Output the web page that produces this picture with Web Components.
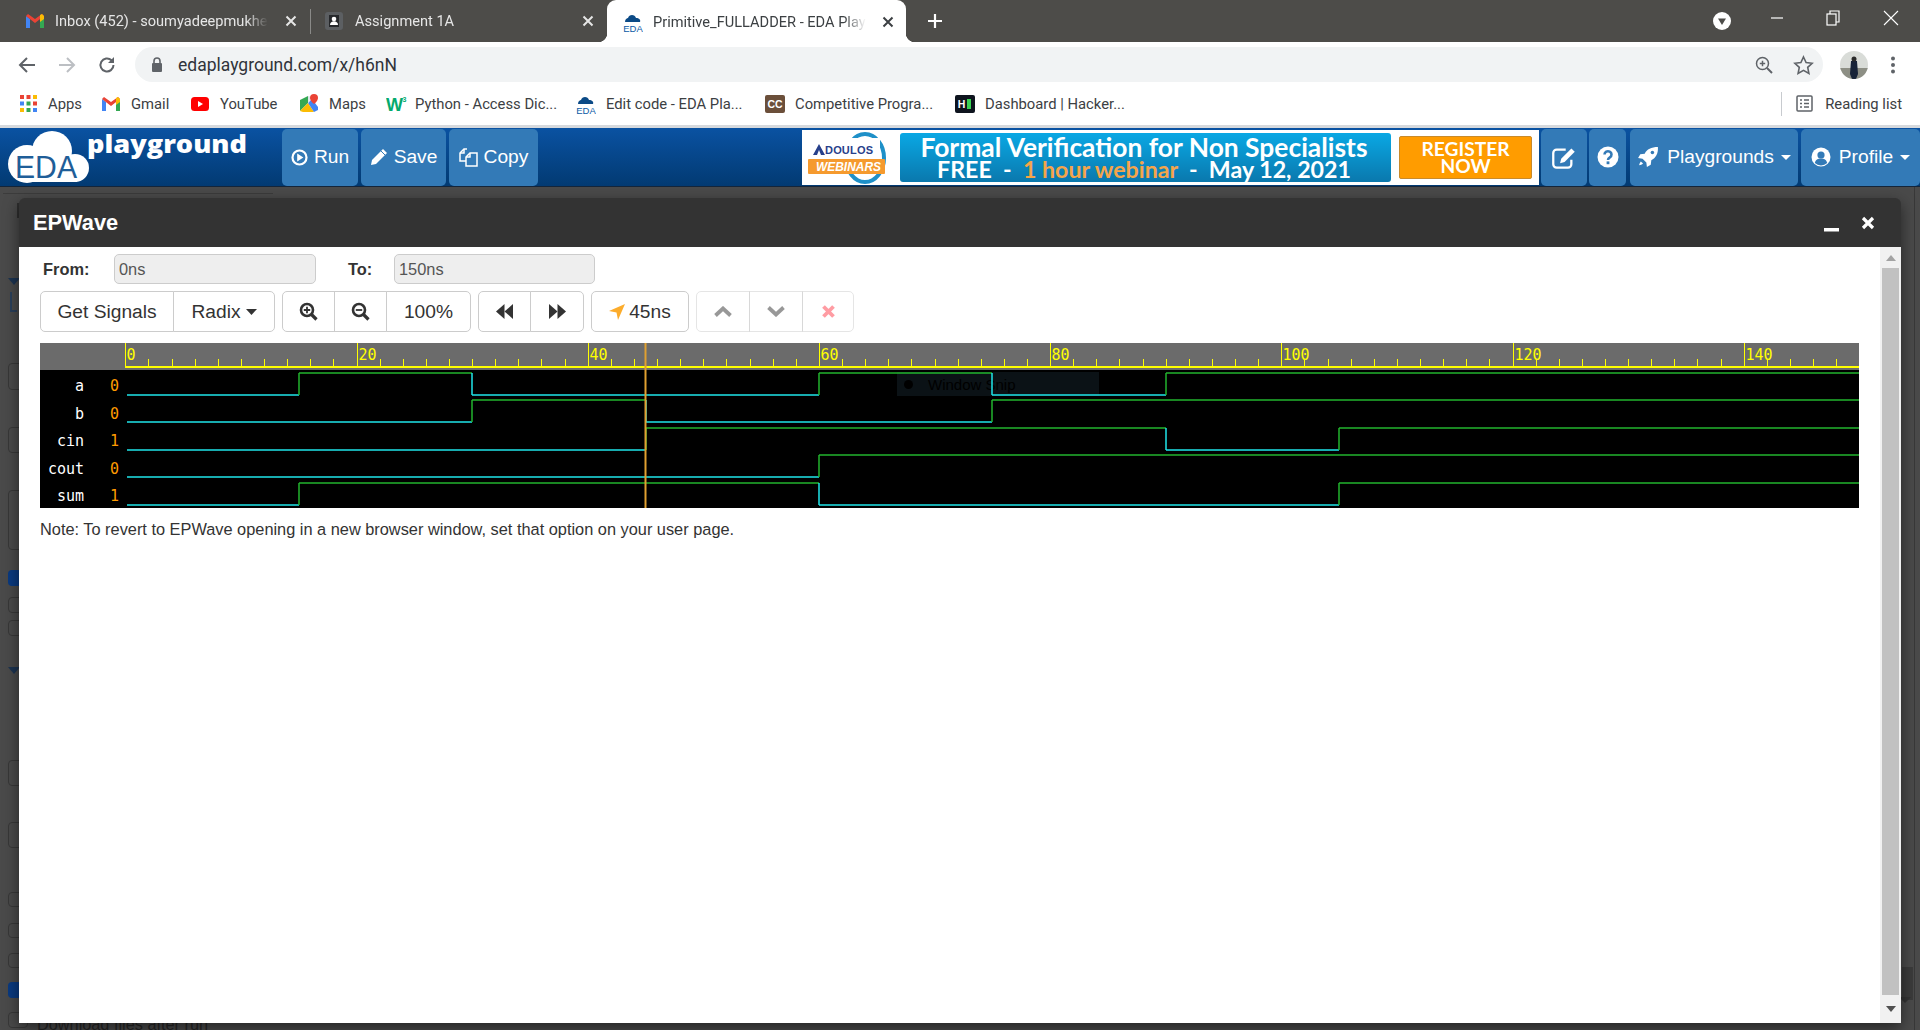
<!DOCTYPE html>
<html>
<head>
<meta charset="utf-8">
<title>EPWave</title>
<style>
  html, body { margin: 0; height: 1030px; overflow: hidden; background: #4a4a4a; }
  body { display: flex; flex-direction: column; font-family: "Liberation Sans", Arial, sans-serif; }
</style>
</head>
<body>
<tab-strip>
  <tab-item label="Inbox (452) - soumyadeepmukhe" w="296">
    <svg slot="icon" width="18" height="14" viewBox="0 0 18 14"><path d="M0 2v12h4V5z" fill="#4285f4"/><path d="M18 2v12h-4V5z" fill="#34a853"/><path d="M0 2l9 7 9-7-2-2-7 5-7-5z" fill="#ea4335"/><path d="M14 1l2-1 2 2v3l-4 3z" fill="#fbbc04"/></svg>
  </tab-item>
  <tab-item label="Assignment 1A" w="297" sep>
    <svg slot="icon" width="18" height="18" viewBox="0 0 18 18"><rect width="18" height="18" rx="3" fill="#5c5f62"/><rect x="4" y="3" width="10" height="12" fill="#26282b"/><circle cx="9" cy="7" r="2.3" fill="#fff"/><path d="M5 13c0-5 8-5 8 0z" fill="#fff"/></svg>
  </tab-item>
  <tab-item label="Primitive_FULLADDER - EDA Playg" w="299" active>
    <svg slot="icon" width="20" height="22" viewBox="0 0 20 22"><path d="M2 11c0-3 2-4 3-4 1-4 7-4 8 0 3 0 5 2 4 4z" fill="#0b4a86"/><text x="10" y="21" text-anchor="middle" font-family="Liberation Sans" font-size="9.5" fill="#0b5aa5">EDA</text></svg>
  </tab-item>
</tab-strip>
<nav-bar></nav-bar>
<bookmark-bar>
  <bookmark-item label="Apps" w="82">
    <svg slot="icon" width="17" height="17" viewBox="0 0 17 17"><g fill="#ea4335"><rect width="4" height="4"/><rect x="6.5" width="4" height="4"/></g><rect x="13" width="4" height="4" fill="#fbbc04"/><rect y="6.5" width="4" height="4" fill="#4285f4"/><rect x="6.5" y="6.5" width="4" height="4" fill="#34a853"/><rect x="13" y="6.5" width="4" height="4" fill="#ea4335"/><rect y="13" width="4" height="4" fill="#fbbc04"/><rect x="6.5" y="13" width="4" height="4" fill="#34a853"/><rect x="13" y="13" width="4" height="4" fill="#4285f4"/></svg>
  </bookmark-item>
  <bookmark-item label="Gmail" w="89">
    <svg slot="icon" width="18" height="14" viewBox="0 0 18 14"><path d="M0 2v12h4V5z" fill="#4285f4"/><path d="M18 2v12h-4V5z" fill="#34a853"/><path d="M0 2l9 7 9-7-2-2-7 5-7-5z" fill="#ea4335"/><path d="M14 1l2-1 2 2v3l-4 3z" fill="#fbbc04"/></svg>
  </bookmark-item>
  <bookmark-item label="YouTube" w="109">
    <svg slot="icon" width="18" height="14" viewBox="0 0 18 14"><rect width="18" height="14" rx="3.5" fill="#f00"/><path d="M7 4l5 3-5 3z" fill="#fff"/></svg>
  </bookmark-item>
  <bookmark-item label="Maps" w="86">
    <svg slot="icon" width="18" height="19" viewBox="0 0 18 19"><path d="M0 6l8-4v7l-8 8z" fill="#34a853"/><path d="M0 17l8-8 6 9H3z" fill="#fbbc04"/><path d="M8 9l4-4 6 8v3l-4 2z" fill="#4285f4"/><path d="M8 2l4 1-4 6z" fill="#dfe3e8"/><path d="M14 0a4 4 0 0 1 4 4c0 3-4 6-4 6s-4-3-4-6a4 4 0 0 1 4-4z" fill="#ea4335"/></svg>
  </bookmark-item>
  <bookmark-item label="Python - Access Dic..." w="190" gap="8">
    <svg slot="icon" width="21" height="16" viewBox="0 0 21 16"><text x="0" y="15" font-family="Liberation Sans" font-weight="700" font-size="18" fill="#04aa6d">W</text><text x="16.5" y="6" font-family="Liberation Sans" font-weight="700" font-size="7" fill="#04aa6d">3</text></svg>
  </bookmark-item>
  <bookmark-item label="Edit code - EDA Pla..." w="189" gap="10">
    <svg slot="icon" width="20" height="22" viewBox="0 0 20 22"><path d="M2 11c0-3 2-4 3-4 1-4 7-4 8 0 3 0 5 2 4 4z" fill="#0b4a86"/><text x="10" y="21" text-anchor="middle" font-family="Liberation Sans" font-size="9.5" fill="#0b5aa5">EDA</text></svg>
  </bookmark-item>
  <bookmark-item label="Competitive Progra..." w="190" gap="10">
    <svg slot="icon" width="20" height="18" viewBox="0 0 20 18"><rect width="20" height="18" rx="2" fill="#6b4f3a"/><text x="10" y="13" text-anchor="middle" font-family="Liberation Sans" font-weight="700" font-size="10.5" fill="#fff">CC</text></svg>
  </bookmark-item>
  <bookmark-item label="Dashboard | Hacker..." w="170" gap="10">
    <svg slot="icon" width="20" height="18" viewBox="0 0 20 18"><rect width="20" height="18" rx="2" fill="#0e141e"/><text x="6.5" y="13" text-anchor="middle" font-family="Liberation Sans" font-weight="700" font-size="10.5" fill="#fff">H</text><rect x="12" y="4" width="4" height="10" fill="#39d353"/></svg>
  </bookmark-item>
  <reading-list></reading-list>
</bookmark-bar>
<eda-header>
  <eda-btn w="76" label="Run">
    <svg slot="icon" width="17" height="17" viewBox="0 0 17 17"><circle cx="8.5" cy="8.5" r="7" fill="none" stroke="#fff" stroke-width="2.2"/><path d="M6.2 4.6l6.2 3.9-6.2 3.9z" fill="#fff"/></svg>
  </eda-btn>
  <eda-btn w="85" label="Save">
    <svg slot="icon" width="18" height="18" viewBox="0 0 18 18"><path d="M13 1l4 4L6 16l-5 1 1-5z" fill="#fff"/><path d="M11 3l4 4" stroke="#337ab7" stroke-width="1"/></svg>
  </eda-btn>
  <eda-btn w="89" label="Copy">
    <svg slot="icon" width="19" height="19" viewBox="0 0 19 19" fill="none" stroke="#fff" stroke-width="1.5"><path d="M8 1H5L1 5v8h6"/><path d="M5 1v4H1"/><path d="M13 5h-2L7 9v9h11V5z"/><path d="M11 5v4H7"/></svg>
  </eda-btn>
  <ad-banner slot="ad"></ad-banner>
  <eda-btn slot="right" w="46">
    <svg slot="icon" width="26" height="25" viewBox="0 0 23 22" fill="none" stroke="#fff" stroke-width="2"><path d="M18 13v4a3 3 0 0 1-3 3H5a3 3 0 0 1-3-3V7a3 3 0 0 1 3-3h8"/><path d="M9 12l-1 4 4-1 9-9-3-3z" fill="#fff" stroke="none"/></svg>
  </eda-btn>
  <eda-btn slot="right" w="37" style="margin-left:-1px;margin-right:1px">
    <svg slot="icon" width="22" height="22" viewBox="0 0 22 22"><circle cx="11" cy="11" r="10.5" fill="#fff"/><path d="M7.5 8.5a3.5 3.3 0 1 1 5.4 2.8c-1.2.8-1.9 1.3-1.9 2.7" fill="none" stroke="#337ab7" stroke-width="2.6"/><rect x="9.6" y="15.4" width="2.8" height="2.8" fill="#337ab7"/></svg>
  </eda-btn>
  <eda-btn slot="right" w="168" label="Playgrounds" caret gap="8">
    <svg slot="icon" width="22" height="22" viewBox="0 0 20 20"><path d="M19 1c-6 0-10 2-12 6l-4 .5L1 11l4 .5 3.5 3.5.5 4 3.5-2 .5-4c4-2 6.500-6 6-12z" fill="#fff"/><circle cx="14" cy="6" r="1.600" fill="#337ab7"/><path d="M3.500 14c-1 1-1.500 2.500-1.500 3.500 1 0 2.500-.5 3.500-1.500z" fill="#fff"/></svg>
  </eda-btn>
  <eda-btn slot="right" w="119" label="Profile" caret gap="8">
    <svg slot="icon" width="20" height="20" viewBox="0 0 20 20"><circle cx="10" cy="10" r="9.500" fill="#fff"/><circle cx="10" cy="8" r="3.600" fill="#337ab7"/><path d="M3.800 16c1-3.500 3-4.500 6.200-4.500s5.200 1 6.200 4.500a9 9 0 0 1-12.400 0z" fill="#337ab7"/></svg>
  </eda-btn>
</eda-header>
<dim-page>
  <ep-modal heading="EPWave">
    <range-row></range-row>
    <tool-row>
      <btn-group>
        <btn-item w="134">Get Signals</btn-item>
        <btn-item w="102">Radix<svg width="11" height="6" viewBox="0 0 11 6" style="margin-left:1px"><path d="M0 0h11L5.500 6z" fill="#333"/></svg></btn-item>
      </btn-group>
      <btn-group>
        <btn-item w="53"><svg width="19" height="19" viewBox="0 0 19 19" fill="none" stroke="#333"><circle cx="8" cy="8" r="6" stroke-width="2.600"/><path d="M12.500 12.500l5 5" stroke-width="3.200"/><path d="M4.800 8h6.400M8 4.800v6.400" stroke-width="1.800"/></svg></btn-item>
        <btn-item w="53"><svg width="19" height="19" viewBox="0 0 19 19" fill="none" stroke="#333"><circle cx="8" cy="8" r="6" stroke-width="2.600"/><path d="M12.500 12.500l5 5" stroke-width="3.200"/><path d="M4.800 8h6.400" stroke-width="1.800"/></svg></btn-item>
        <btn-item w="85">100%</btn-item>
      </btn-group>
      <btn-group>
        <btn-item w="53"><svg width="17" height="15" viewBox="0 0 17 15" fill="#333"><path d="M8.500 0v15L0 7.500z"/><path d="M17 0v15L8.500 7.500z"/></svg></btn-item>
        <btn-item w="54"><svg width="17" height="15" viewBox="0 0 17 15" fill="#333"><path d="M0 0v15l8.500-7.500z"/><path d="M8.500 0v15L17 7.500z"/></svg></btn-item>
      </btn-group>
      <btn-group>
        <btn-item w="98"><svg width="16" height="16" viewBox="0 0 16 16"><path d="M16 0L9 16 7.500 8.500 0 7z" fill="#fcac2c"/></svg>45ns</btn-item>
      </btn-group>
      <btn-group>
        <btn-item w="54" disabled><svg width="18" height="11" viewBox="0 0 18 11" fill="none" stroke="#333" stroke-width="3.800"><path d="M1.500 9.500L9 2.500l7.500 7"/></svg></btn-item>
        <btn-item w="54" disabled><svg width="18" height="11" viewBox="0 0 18 11" fill="none" stroke="#333" stroke-width="3.800"><path d="M1.500 1.500L9 8.500l7.500-7"/></svg></btn-item>
        <btn-item w="52" disabled><svg width="13" height="13" viewBox="0 0 13 13" fill="none" stroke="#ff3b4a" stroke-width="3.800"><path d="M1.500 1.500l10 10M11.500 1.500l-10 10"/></svg></btn-item>
      </btn-group>
    </tool-row>
    <wave-view></wave-view>
    <modal-note>Note: To revert to EPWave opening in a new browser window, set that option on your user page.</modal-note>
  </ep-modal>
</dim-page>

<script>
class TabStrip extends HTMLElement {
  constructor() {
    super();
    this.attachShadow({ mode: "open" }).innerHTML = `
      <style>
        :host { display: flex; height: 42px; background: #4d4c49; padding-left: 14px; flex: none; position: relative; }
        .plus { margin-left: 20px; align-self: center; display: flex; }
        .win { margin-left: auto; display: flex; align-items: center; height: 42px; }
      </style>
      <slot></slot>
      <svg class="plus" width="18" height="18" viewBox="0 0 18 18"><path d="M9 2v14M2 9h14" stroke="#fff" stroke-width="2.200"/></svg>
      <div class="win">
        <svg width="20" height="20" viewBox="0 0 20 20" style="margin-right:38px"><circle cx="10" cy="10" r="9" fill="#fff"/><path d="M6 7.500h8L10 14z" fill="#4d4c49"/></svg>
        <svg width="14" height="14" viewBox="0 0 14 14" style="margin-right:42px;margin-top:-6px"><path d="M1 7h12" stroke="#fff" stroke-width="1.200"/></svg>
        <svg width="14" height="16" viewBox="0 0 14 16" style="margin-right:43px;margin-top:-6px" fill="none" stroke="#fff" stroke-width="1.200"><rect x="1" y="4" width="9" height="11"/><path d="M4 4V1h9v11h-3"/></svg>
        <svg width="16" height="16" viewBox="0 0 16 16" style="margin-right:21px;margin-top:-6px"><path d="M1 1l14 14M15 1L1 15" stroke="#fff" stroke-width="1.100"/></svg>
      </div>`;
  }
}

class TabItem extends HTMLElement {
  constructor() {
    super();
    const root = this.attachShadow({ mode: "open" });
    root.innerHTML = `
      <style>
        :host { display: flex; align-items: center; height: 42px; box-sizing: border-box; padding: 0 13px 0 12px; gap: 11px;
          color: #e6e6e6; font: 14.600px Roboto, "Liberation Sans", sans-serif; position: relative; flex: none; }
        :host([sep]) { padding-left: 15px; gap: 12px; }
        :host([sep])::before { content: ""; position: absolute; left: 0; top: 9px; height: 25px; width: 1px; background: #8a8a88; }
        :host([active]) { background: #fff; color: #3c4043; border-radius: 9px 9px 0 0; padding: 2px 12px 0 16px; gap: 10px; }
        :host([active])::before, :host([active])::after { content: ""; position: absolute; bottom: 0; width: 9px; height: 9px; }
        :host([active])::before { left: -9px; background: radial-gradient(circle at 0 0, transparent 9px, #fff 9.500px); }
        :host([active])::after { right: -9px; background: radial-gradient(circle at 100% 0, transparent 9px, #fff 9.500px); }
        ::slotted(svg) { flex: none; display: block; }
        .title { flex: 1; min-width: 0; overflow: hidden; white-space: nowrap;
          -webkit-mask-image: linear-gradient(to left, transparent 6px, #000 28px); mask-image: linear-gradient(to left, transparent 6px, #000 28px); }
        .x { flex: none; }
      </style>
      <slot name="icon"></slot>
      <span class="title"></span>
      <svg class="x" width="12" height="12" viewBox="0 0 12 12"><path d="M1.500 1.500l9 9M10.500 1.500l-9 9" stroke="currentColor" stroke-width="2"/></svg>`;
    root.querySelector(".title").textContent = this.getAttribute("label");
    this.style.width = this.getAttribute("w") + "px";
  }
}

class NavBar extends HTMLElement {
  constructor() {
    super();
    this.attachShadow({ mode: "open" }).innerHTML = `
      <style>
        :host { display: flex; align-items: flex-start; height: 40px; box-sizing: border-box; padding: 5px 0 0 17px; background: #fff; flex: none; }
        .ico { height: 35px; display: flex; align-items: center; flex: none; }
        .pill { margin-left: 18px; width: 1688px; height: 35px; border-radius: 18px; background: #f1f3f4; display: flex; align-items: center; box-sizing: border-box; padding: 0 9px 0 16px;
          font: 17.500px Roboto, "Liberation Sans", sans-serif; color: #30343a; }
        .url { margin-left: 15px; }
        .end { margin-left: auto; display: flex; align-items: center; gap: 19px; }
      </style>
      <div class="ico" style="gap:20px">
        <svg width="20" height="20" viewBox="0 0 20 20" fill="none" stroke="#5f6368" stroke-width="2"><path d="M18 10H3M10 3l-7 7 7 7"/></svg>
        <svg width="20" height="20" viewBox="0 0 20 20" fill="none" stroke="#bcbfc3" stroke-width="2"><path d="M2 10h15M10 3l7 7-7 7"/></svg>
        <svg width="20" height="20" viewBox="0 0 20 20" fill="none" stroke="#5f6368" stroke-width="2"><path d="M16.500 10a6.500 6.500 0 1 1-2-4.700L16 7"/><path d="M17 2v6h-6" fill="#5f6368" stroke="none"/></svg>
      </div>
      <div class="pill">
        <svg width="12" height="15" viewBox="0 0 12 15"><path d="M3 6V4a3 3 0 0 1 6 0v2" fill="none" stroke="#5f6368" stroke-width="1.600"/><rect x="1" y="6" width="10" height="9" rx="1" fill="#5f6368"/></svg>
        <span class="url">edaplayground.com/x/h6nN</span>
        <span class="end">
          <svg width="20" height="20" viewBox="0 0 20 20" fill="none" stroke="#5f6368" stroke-width="1.500"><circle cx="8.500" cy="8.500" r="6"/><path d="M13 13l5 5" stroke-width="2"/><path d="M5.800 8.500h5.400M8.500 5.800v5.400"/></svg>
          <svg width="21" height="20" viewBox="0 0 21 20" fill="none" stroke="#5f6368" stroke-width="1.600"><path d="M10.500 2l2.600 5.600 6 .7-4.400 4.100 1.200 6-5.400-3-5.400 3 1.200-6L1.900 8.300l6-.7z"/></svg>
        </span>
      </div>
      <div class="ico" style="margin-left:17px">
        <svg width="28" height="28" viewBox="0 0 28 28"><defs><clipPath id="av"><circle cx="14" cy="14" r="14"/></clipPath></defs><g clip-path="url(#av)"><rect width="28" height="28" fill="#d9dcd8"/><rect y="17" width="28" height="11" fill="#8d8f85"/><path d="M11 10h6l1 13-2 5h-4l-2-5z" fill="#172338"/><circle cx="14" cy="8" r="2.500" fill="#2a2a2a"/></g></svg>
      </div>
      <div class="ico" style="margin-left:23px">
        <svg width="4" height="18" viewBox="0 0 4 18" fill="#5f6368"><circle cx="2" cy="2.500" r="2"/><circle cx="2" cy="9" r="2"/><circle cx="2" cy="15.500" r="2"/></svg>
      </div>`;
  }
}

class BookmarkBar extends HTMLElement {
  constructor() {
    super();
    this.attachShadow({ mode: "open" }).innerHTML = `
      <style>
        :host { display: flex; align-items: center; height: 46px; box-sizing: border-box; border-bottom: 3px solid #d6d9dd; padding-left: 20px; background: #fff; flex: none; }
      </style>
      <slot></slot>`;
  }
}

class BookmarkItem extends HTMLElement {
  constructor() {
    super();
    const root = this.attachShadow({ mode: "open" });
    root.innerHTML = `
      <style>
        :host { display: flex; align-items: center; gap: 11px; font: 14.800px Roboto, "Liberation Sans", sans-serif; color: #3c4043; white-space: nowrap; flex: none; }
        ::slotted(svg) { display: block; flex: none; }
      </style>
      <slot name="icon"></slot><span></span>`;
    root.querySelector("span").textContent = this.getAttribute("label");
    this.style.width = this.getAttribute("w") + "px";
    if (this.hasAttribute("gap")) {
      this.style.gap = this.getAttribute("gap") + "px";
    }
  }
}

class ReadingList extends HTMLElement {
  constructor() {
    super();
    this.attachShadow({ mode: "open" }).innerHTML = `
      <style>
        :host { display: flex; align-items: center; margin-left: auto; height: 24px; border-left: 1px solid #c8cbcf; padding: 0 18px 0 14px; gap: 12px;
          font: 14.800px Roboto, "Liberation Sans", sans-serif; color: #3c4043; white-space: nowrap; }
      </style>
      <svg width="17" height="17" viewBox="0 0 17 17" fill="none" stroke="#5f6368" stroke-width="1.500"><rect x="1" y="1" width="15" height="15" rx="1"/><path d="M4 5h2M8 5h5M4 8.500h2M8 8.500h5M4 12h2M8 12h5"/></svg>
      <span>Reading list</span>`;
  }
}

class EdaHeader extends HTMLElement {
  constructor() {
    super();
    this.attachShadow({ mode: "open" }).innerHTML = `
      <style>
        :host { display: flex; align-items: center; height: 59px; flex: none; box-sizing: border-box; border-bottom: 1px solid #14253a;
          background: linear-gradient(#0a52a2, #023a72); }
        .logo { width: 282px; flex: none; display: block; overflow: visible; }
        .left { display: flex; gap: 3px; }
        .ad { margin-left: auto; }
        .right { display: flex; gap: 3px; margin-left: 2px; }
      </style>
      <svg class="logo" width="282" height="58" viewBox="0 0 282 58">
        <g fill="#fff"><circle cx="27" cy="36" r="19"/><circle cx="52" cy="23" r="20"/><circle cx="75" cy="40" r="14"/><rect x="27" y="30" width="50" height="24"/></g>
        <text x="15" y="50" font-family="Liberation Sans" font-size="31" fill="#1f5e98" textLength="62" lengthAdjust="spacingAndGlyphs">EDA</text>
        <text x="87" y="25" font-family="Open Sans" font-weight="800" font-size="25" fill="#fff" textLength="160" lengthAdjust="spacingAndGlyphs">playground</text>
      </svg>
      <div class="left"><slot></slot></div>
      <div class="ad"><slot name="ad"></slot></div>
      <div class="right"><slot name="right"></slot></div>`;
  }
}

class EdaBtn extends HTMLElement {
  constructor() {
    super();
    const root = this.attachShadow({ mode: "open" });
    const label = this.getAttribute("label");
    root.innerHTML = `
      <style>
        :host { display: flex; align-items: center; justify-content: center; gap: 6px; height: 57px; background: #337ab7; border-radius: 5px; color: #fff; font-size: 19.200px; flex: none; }
        ::slotted(svg) { display: block; }
        .caret { width: 0; height: 0; margin-left: -1px; border: 5px solid transparent; border-top-color: #fff; border-bottom: 0; }
      </style>
      <slot name="icon"></slot>
      ${label ? `<span>${label}</span>` : ""}
      ${this.hasAttribute("caret") ? `<i class="caret"></i>` : ""}`;
    this.style.width = this.getAttribute("w") + "px";
    if (this.hasAttribute("gap")) {
      this.style.gap = this.getAttribute("gap") + "px";
    }
  }
}

class AdBanner extends HTMLElement {
  constructor() {
    super();
    this.attachShadow({ mode: "open" }).innerHTML = `
      <style>
        :host { display: flex; align-items: center; width: 737px; height: 55px; background: #fff; box-sizing: border-box; font-family: Lato, "Open Sans", sans-serif; }
        .brand { width: 98px; flex: none; display: block; }
        .promo { width: 491px; height: 49px; flex: none; border-radius: 3px; background: linear-gradient(#0aa8e4, #0a78ad); color: #fff; font-weight: 700; text-align: center; padding: 3px 3px 0 0; box-sizing: border-box; white-space: pre; }
        .l1 { font-size: 26.400px; line-height: 22px; height: 22px; }
        .l2 { font-size: 23.200px; line-height: 22px; height: 22px; }
        .l2 b { color: #f5a54a; font-weight: 700; }
        .reg { margin-left: 8px; width: 133px; height: 43px; flex: none; background: #ff9c00; border: 1px solid #c98a2a; box-sizing: border-box; border-radius: 2px; color: #fff; font-weight: 700; text-align: center; font-size: 19.200px; line-height: 17px; padding-top: 3px; }
      </style>
      <svg class="brand" width="98" height="55" viewBox="0 0 98 55">
        <ellipse cx="63" cy="28" rx="19" ry="24" fill="none" stroke="#1e90c8" stroke-width="4"/>
        <rect x="10" y="8" width="68" height="31" fill="#fff"/>
        <path d="M11 25l6-11 6 11zM15 25l2-5 2 5z" fill="#27408b" fill-rule="evenodd"/>
        <text x="23" y="24" font-family="Liberation Sans" font-weight="700" font-size="11" fill="#27408b" textLength="48">DOULOS</text>
        <rect x="6" y="29" width="77" height="15" rx="1" fill="#f59a2e"/>
        <text x="14" y="41" font-family="Liberation Sans" font-weight="700" font-style="italic" font-size="13" fill="#fff" textLength="65" lengthAdjust="spacingAndGlyphs">WEBINARS</text>
      </svg>
      <div class="promo"><div class="l1">Formal Verification for Non Specialists</div><div class="l2">FREE  -  <b>1 hour webinar</b>  -  May 12, 2021</div></div>
      <div class="reg">REGISTER<br>NOW</div>`;
  }
}

class DimPage extends HTMLElement {
  constructor() {
    super();
    // what is left visible of the page under the dialog
    const marks = [
      [203, 15, "txt"], [278, 7, "tri"], [292, 20, "bar"], [363, 27, "box"], [427, 26, "box"], [490, 60, "box"],
      [570, 16, "on"], [597, 16, "box"], [620, 16, "box"], [667, 7, "tri"], [760, 26, "box"], [822, 26, "box"],
      [892, 15, "box"], [923, 15, "box"], [953, 15, "box"], [982, 16, "on"], [1012, 16, "box"],
    ];
    let y = 187;
    const html = marks.map(([top, h, kind]) => {
      const s = `<div class="${kind}" style="margin-top:${top - y}px;height:${h}px"></div>`;
      y = top + h;
      return s;
    }).join("");
    this.attachShadow({ mode: "open" }).innerHTML = `
      <style>
        :host { display: block; position: relative; flex: 1; min-height: 0; background: #4a4a4a; overflow: hidden; }
        .strip { display: flex; flex-direction: column; align-items: flex-start; padding-left: 8px; width: 11px; position: relative; }
        .strip::before { content: ""; position: absolute; left: 3px; right: 0; top: 6px; height: 1px; background: #3c3c3c; width: 270px; }
        .box { width: 20px; flex: none; box-sizing: border-box; border: 1.500px solid #383838; border-radius: 4px; }
        .on { width: 20px; flex: none; background: #0a3a80; border-radius: 4px; }
        .tri { width: 0; flex: none; border: 6px solid transparent; border-top: 7px solid #1c3350; border-bottom: 0; height: 0 !important; }
        .bar { width: 7px; flex: none; border-left: 2px solid #2a3f5a; border-bottom: 2px solid #2a3f5a; margin-left: 2px; box-sizing: border-box; }
        .txt { width: 4px; margin-left: 9px; flex: none; background: #2f2f2f; }
        .dl { position: absolute; left: 37px; top: 828px; font-size: 16.300px; color: #262626; white-space: nowrap; }
        .edge { position: absolute; right: 5px; top: 0; bottom: 0; width: 1px; background: #383838; }
        .cell { position: absolute; right: 7px; top: 780px; width: 11px; height: 33px; background: #3b3b3b; }
        .arrow { position: absolute; right: 9px; border: 6px solid transparent; border-bottom: 0; border-top: 6px solid #333; }
      </style>
      <div class="strip">${html}</div>
      <div class="dl">Download files after run</div>
      <div class="edge"></div>
      <div class="cell"></div>
      <div class="arrow" style="top:810px"></div>
      <slot></slot>`;
  }
}

class EpModal extends HTMLElement {
  constructor() {
    super();
    const root = this.attachShadow({ mode: "open" });
    root.innerHTML = `
      <style>
        :host { display: flex; flex-direction: column; position: absolute; left: 19px; top: 11px; width: 1882px; height: 825px;
          border-radius: 6px 6px 0 0; background: #333; box-shadow: 0 5px 15px rgba(0,0,0,.5); overflow: hidden; }
        header { display: flex; align-items: center; height: 49px; flex: none; padding: 0 26px 0 14px; color: #fff; }
        h4 { margin: 0; flex: 1; font-size: 21.800px; font-weight: 700; }
        .min { margin-right: 22px; margin-top: 14px; display: block; }
        .body { flex: 1; min-height: 0; display: flex; background: #fff; }
        .main { flex: 1; min-width: 0; padding: 7px 0 0 21px; display: flex; flex-direction: column; }
        .bar { width: 21px; flex: none; background: #f1f1f1; display: flex; flex-direction: column; align-items: center; }
        .thumb { width: 17px; flex: 1; background: #c1c1c1; }
        .step { height: 21px; flex: none; display: flex; align-items: center; justify-content: center; }
      </style>
      <header>
        <h4></h4>
        <svg class="min" width="15" height="4" viewBox="0 0 15 4"><rect width="15" height="3.500" fill="#fff"/></svg>
        <svg width="14" height="14" viewBox="0 0 14 14"><path d="M2 2l10 10M12 2L2 12" stroke="#fff" stroke-width="3.200"/></svg>
      </header>
      <div class="body">
        <div class="main"><slot></slot></div>
        <div class="bar">
          <div class="step"><svg width="10" height="6" viewBox="0 0 10 6"><path d="M5 0l5 6H0z" fill="#a3a3a3"/></svg></div>
          <div class="thumb"></div>
          <div class="step" style="height:28px"><svg width="10" height="6" viewBox="0 0 10 6"><path d="M0 0h10L5 6z" fill="#505050"/></svg></div>
        </div>
      </div>`;
    root.querySelector("h4").textContent = this.getAttribute("heading");
  }
}

class RangeRow extends HTMLElement {
  constructor() {
    super();
    this.attachShadow({ mode: "open" }).innerHTML = `
      <style>
        :host { display: flex; align-items: center; height: 30px; flex: none; padding-left: 3px; color: #333; font-size: 16.400px; }
        label { font-weight: 700; }
        .val { box-sizing: border-box; height: 30px; background: #eee; border: 1px solid #ccc; border-radius: 5px; padding: 0 4px; display: flex; align-items: center; color: #555; }
      </style>
      <label style="width:71px">From:</label><div class="val" style="width:202px">0ns</div>
      <label style="width:46px;margin-left:32px">To:</label><div class="val" style="width:201px">150ns</div>`;
  }
}

class ToolRow extends HTMLElement {
  constructor() {
    super();
    this.attachShadow({ mode: "open" }).innerHTML = `
      <style>:host { display: flex; gap: 7px; margin-top: 7px; flex: none; }</style><slot></slot>`;
  }
}

class BtnGroup extends HTMLElement {
  constructor() {
    super();
    this.attachShadow({ mode: "open" }).innerHTML = `
      <style>:host { display: flex; padding-left: 1px; }</style><slot></slot>`;
  }
}

class BtnItem extends HTMLElement {
  constructor() {
    super();
    this.attachShadow({ mode: "open" }).innerHTML = `
      <style>
        :host { display: flex; align-items: center; justify-content: center; gap: 4px; box-sizing: border-box; height: 41px; margin-left: -1px;
          border: 1px solid #ccc; background: #fff; color: #333; font-size: 19.200px; white-space: pre; flex: none; }
        :host(:first-child) { border-radius: 5px 0 0 5px; }
        :host(:last-child) { border-radius: 0 5px 5px 0; }
        :host(:only-child) { border-radius: 5px; }
        :host([disabled]) { opacity: .5; }
        ::slotted(svg) { display: block; }
      </style>
      <slot></slot>`;
    this.style.width = this.getAttribute("w") + "px";
  }
}

class WaveView extends HTMLElement {
  constructor() {
    super();
    const X0 = 125.3, PX = 11.56;
    const xOf = (ns) => X0 + ns * PX;
    const signals = [
      { name: "a", val: "0", hi: 373, lo: 395, edges: [15, 30, 60, 75, 90], start: 0 },
      { name: "b", val: "0", hi: 400, lo: 422, edges: [30, 45, 75], start: 0 },
      { name: "cin", val: "1", hi: 428, lo: 450, edges: [45, 90, 105], start: 0 },
      { name: "cout", val: "0", hi: 455, lo: 477, edges: [60], start: 0 },
      { name: "sum", val: "1", hi: 483, lo: 505, edges: [15, 60, 105], start: 0 },
    ];
    let out = "";
    // time ruler
    for (let ns = 0; ns <= 150; ns += 2) {
      const x = Math.round(xOf(ns)) + 0.5;
      const top = ns % 20 === 0 ? 343 : 359;
      out += `<line x1="${x}" x2="${x}" y1="${top}" y2="367" stroke="#ff0" stroke-width="1"/>`;
      if (ns % 20 === 0) {
        out += `<text x="${x + 1}" y="360" class="t">${ns}</text>`;
      }
    }
    out += `<rect x="125" y="366" width="1734" height="2" fill="#ff0"/>`;
    signals.forEach((s, i) => {
      const cy = [386, 414, 441, 469, 496][i];
      out += `<text x="84" y="${cy + 5}" class="n" text-anchor="end">${s.name}</text>`;
      out += `<text x="119" y="${cy + 5}" class="v" text-anchor="end">${s.val}</text>`;
      let level = s.start, from = 127;
      const stops = s.edges.concat([150]);
      stops.forEach((ns, k) => {
        const x = ns === 150 ? 1859 : Math.round(xOf(ns));
        const y = level ? s.hi : s.lo;
        out += `<line x1="${from}" x2="${x}" y1="${y}" y2="${y}" stroke="${level ? "#22b52e" : "#1fe6ea"}" stroke-width="1.500"/>`;
        if (ns !== 150) {
          out += `<line x1="${x}" x2="${x}" y1="${s.hi}" y2="${s.lo}" stroke="${level ? "#1fe6ea" : "#22b52e"}" stroke-width="1.500"/>`;
        }
        from = x;
        level = level ? 0 : 1;
      });
    });
    out += `<line x1="645.500" x2="645.500" y1="343" y2="508" stroke="#e0a030" stroke-width="2"/>`;
    this.attachShadow({ mode: "open" }).innerHTML = `
      <style>
        :host { display: block; position: relative; width: 1819px; height: 165px; margin-top: 11px; flex: none; background: linear-gradient(#6b6b6b 27px, #000 27px); }
        svg { position: relative; display: block; }
        .t { font: 15px "DejaVu Sans Mono", monospace; fill: #ff0; }
        .n { font: 15px "DejaVu Sans Mono", monospace; fill: #fff; }
        .v { font: 15px "DejaVu Sans Mono", monospace; fill: #ff9a00; }
        .snip { position: absolute; left: 857px; top: 29px; width: 202px; height: 24px; background: #0b1216; display: flex; align-items: center; gap: 15px; padding-left: 7px; box-sizing: border-box; color: #000; font: 15px "Liberation Sans", sans-serif; }
        .snip i { width: 9px; height: 9px; border-radius: 50%; background: #000; }
      </style>
      <div class="snip"><i></i><span>Window Snip</span></div>
      <svg width="1819" height="165" viewBox="40 343 1819 165">${out}</svg>`;
  }
}

class ModalNote extends HTMLElement {
  constructor() {
    super();
    this.attachShadow({ mode: "open" }).innerHTML = `
      <style>:host { display: block; margin-top: 11px; font-size: 16.350px; line-height: 20px; color: #333; flex: none; }</style><slot></slot>`;
  }
}

customElements.define("tab-strip", TabStrip);
customElements.define("tab-item", TabItem);
customElements.define("nav-bar", NavBar);
customElements.define("bookmark-bar", BookmarkBar);
customElements.define("bookmark-item", BookmarkItem);
customElements.define("reading-list", ReadingList);
customElements.define("eda-header", EdaHeader);
customElements.define("eda-btn", EdaBtn);
customElements.define("ad-banner", AdBanner);
customElements.define("dim-page", DimPage);
customElements.define("ep-modal", EpModal);
customElements.define("range-row", RangeRow);
customElements.define("tool-row", ToolRow);
customElements.define("btn-group", BtnGroup);
customElements.define("btn-item", BtnItem);
customElements.define("wave-view", WaveView);
customElements.define("modal-note", ModalNote);
</script>
</body>
</html>
